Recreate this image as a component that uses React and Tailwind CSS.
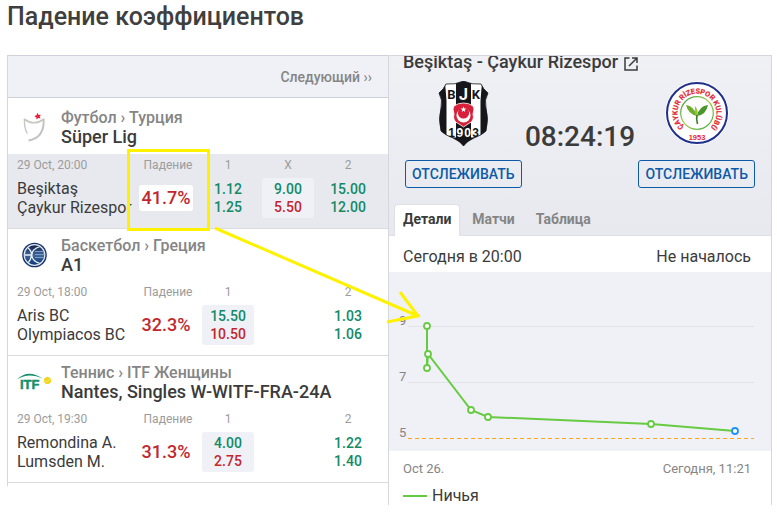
import { useState } from "react";

const matches = [
  {
    id: 1,
    sport: "Футбол › Турция",
    league: "Süper Lig",
    logo: SuperLigLogo,
    date: "29 Oct, 20:00",
    teams: ["Beşiktaş", "Çaykur Rizespor"],
    drop: "41.7%",
    active: true,
    odds: [
      { label: "1", from: "1.12", to: "1.25" },
      { label: "X", from: "9.00", to: "5.50", dropped: true },
      { label: "2", from: "15.00", to: "12.00" },
    ],
  },
  {
    id: 2,
    sport: "Баскетбол › Греция",
    league: "A1",
    logo: BasketLogo,
    date: "29 Oct, 18:00",
    teams: ["Aris BC", "Olympiacos BC"],
    drop: "32.3%",
    odds: [
      { label: "1", from: "15.50", to: "10.50", dropped: true },
      { label: "" },
      { label: "2", from: "1.03", to: "1.06" },
    ],
  },
  {
    id: 3,
    sport: "Теннис › ITF Женщины",
    league: "Nantes, Singles W-WITF-FRA-24A",
    logo: ItfLogo,
    date: "29 Oct, 19:30",
    teams: ["Remondina A.", "Lumsden M."],
    drop: "31.3%",
    odds: [
      { label: "1", from: "4.00", to: "2.75", dropped: true },
      { label: "" },
      { label: "2", from: "1.22", to: "1.40" },
    ],
  },
];

const tabs = ["Детали", "Матчи", "Таблица"];

const points = [
  [38, 54],
  [38, 96],
  [39, 82],
  [82, 138],
  [99, 145],
  [262, 152],
  [346, 159],
];

function SuperLigLogo() {
  return (
    <svg viewBox="0 0 32 32" className="h-8 w-8" fill="none">
      <path d="M5 8 Q15 15.500 25 8" stroke="#c9c7c3" strokeWidth="1.600" />
      <path d="M5.500 8 Q5 17 8.300 22.500" stroke="#c9c7c3" strokeWidth="1.400" />
      <path d="M24.700 8 Q25.500 27 9.500 29.500" stroke="#c4c2be" strokeWidth="1.900" />
      <path
        d="M18.600 1.800 L19.700 3.900 L22 3.700 L20.700 5.500 L21.500 7.600 L19.200 7 L17.500 8.600 L17.300 6.300 L15.300 5.200 L17.600 4.100 Z"
        fill="#e8203f"
      />
    </svg>
  );
}

function BasketLogo() {
  return (
    <svg viewBox="0 0 32 32" className="h-8 w-8" fill="none">
      <defs>
        <linearGradient id="ball" x1="0" y1="0" x2="0" y2="1">
          <stop offset="0" stopColor="#111c40" />
          <stop offset=".5" stopColor="#40689c" />
          <stop offset="1" stopColor="#0b3678" />
        </linearGradient>
        <clipPath id="ballClip">
          <circle cx="15.500" cy="16" r="9.800" />
        </clipPath>
      </defs>
      <circle cx="15.500" cy="16" r="12.300" fill="#15346c" />
      <circle cx="15.500" cy="16" r="10.300" fill="url(#ball)" stroke="#dfe6f0" strokeWidth="1.200" />
      <g clipPath="url(#ballClip)">
        <path d="M16 12.500 H27 M16 15.500 H27 M16 18.500 H27" stroke="#7d9dc4" strokeWidth="1" />
        <path
          d="M5 16 H13 M8 8 Q13 12 12.500 16 Q12 21 9 24 M21 7.500 Q13 10 12.800 16 Q13 22 21 24.500"
          stroke="#e8eef6"
          strokeWidth="1.300"
        />
      </g>
    </svg>
  );
}

function ItfLogo() {
  return (
    <svg viewBox="0 0 36 32" className="h-8 w-9" fill="none">
      <path d="M0 13.500 Q11 2.500 25.500 12.500 Q12 6 0 13.500 Z" fill="#16906c" />
      <text
        x="3"
        y="23"
        fontFamily="Liberation Sans, sans-serif"
        fontSize="13"
        fontWeight="700"
        fill="#16906c"
        stroke="#16906c"
        strokeWidth=".5"
      >
        ITF
      </text>
      <circle cx="30.500" cy="14.500" r="3.600" fill="#f0d51c" />
      <path d="M27.500 15 Q30.500 16.500 33.500 13" stroke="#f8eb8d" strokeWidth=".8" />
    </svg>
  );
}

function BesiktasCrest() {
  return (
    <svg viewBox="0 0 51 66" className="h-[66px] w-[51px]">
      <defs>
        <clipPath id="shield">
          <path d="M8 3 Q17 4 25.500 0 Q34 4 43 3 Q45 8 50 12 Q46 19 48 27 Q51 38 48 50 Q44 54 36 57 Q29 60 25.500 65 Q22 60 15 57 Q7 54 3 50 Q0 38 3 27 Q5 19 1 12 Q6 8 8 3 Z" />
        </clipPath>
      </defs>
      <g clipPath="url(#shield)">
        <rect width="51" height="66" fill="#fff" />
        <path
          d="M0 10 L7 2 Q8 12 8.500 20 V66 H0 Z M51 10 L44 2 Q43 12 42.500 20 V66 H51 Z"
          fill="#15151a"
        />
        <rect x="18" width="15" height="66" fill="#15151a" />
        <path d="M9 45 H17 V56 H9 Z M34 45 H42 V56 H34 Z" fill="#fff" />
        <path d="M5 56 Q17 55.500 25.500 58 Q34 55.500 46 56 V66 H5 Z" fill="#15151a" />
      </g>
      <path
        d="M8 3 Q17 4 25.500 0 Q34 4 43 3 Q45 8 50 12 Q46 19 48 27 Q51 38 48 50 Q44 54 36 57 Q29 60 25.500 65 Q22 60 15 57 Q7 54 3 50 Q0 38 3 27 Q5 19 1 12 Q6 8 8 3 Z"
        fill="none"
        stroke="#15151a"
        strokeWidth=".8"
      />
      <path
        d="M16 25 Q20 22 25.500 22 Q31 22 35 25 L36 28 L35 33 Q37 40 30 43 L25.500 46 L21 43 Q14 40 16 33 L15 28 Z"
        fill="#d9203a"
        stroke="#fff"
        strokeWidth=".8"
      />
      <circle cx="25.500" cy="34.500" r="7" fill="#fff" />
      <circle cx="25.500" cy="32" r="5.600" fill="#d9203a" />
      <path
        d="M25.500 25.500 L26.300 27.500 L28.400 27.600 L26.700 28.900 L27.300 31 L25.500 29.800 L23.700 31 L24.300 28.900 L22.600 27.600 L24.700 27.500 Z"
        fill="#fff"
      />
      <g fontFamily="Roboto, sans-serif" fontWeight="700" textAnchor="middle">
        <text x="13.300" y="17.500" fontSize="13" fill="#15151a">B</text>
        <text x="25.500" y="18.500" fontSize="16" fill="#fff">J</text>
        <text x="38" y="17.500" fontSize="13" fill="#15151a">K</text>
      </g>
      <g fontFamily="Liberation Sans, sans-serif" fontWeight="700" fontSize="12" textAnchor="middle">
        <text x="13.500" y="56" fill="#15151a">1</text>
        <text x="21.800" y="56" fill="#fff">9</text>
        <text x="29.500" y="56" fill="#fff">0</text>
        <text x="37.700" y="56" fill="#15151a">3</text>
      </g>
    </svg>
  );
}

function RizesporCrest() {
  return (
    <svg viewBox="0 0 64 64" className="h-16 w-16">
      <defs>
        <path id="ringTop" d="M27.100 50.800 A19.400 19.400 0 1 1 36.900 50.800" />
        <linearGradient id="ring" x1="0" y1="0" x2="1" y2="1">
          <stop offset="0" stopColor="#2f9a43" />
          <stop offset=".5" stopColor="#a5cf4c" />
          <stop offset="1" stopColor="#3fa345" />
        </linearGradient>
      </defs>
      <circle cx="32" cy="32" r="31.800" fill="#fff" />
      <circle cx="32" cy="32" r="30" fill="#fff" stroke="#20308a" strokeWidth="2" />
      <circle cx="32" cy="32" r="16.300" fill="#fff" stroke="url(#ring)" strokeWidth="1.200" />
      <g fontWeight="700" fill="#e12a32" textAnchor="middle">
        <text
          fontFamily="Roboto, sans-serif"
          fontSize="7.200"
          stroke="#e12a32"
          strokeWidth=".2"
        >
          <textPath href="#ringTop" startOffset="50%">ÇAYKUR RİZESPOR KULÜBÜ</textPath>
        </text>
        <text x="32" y="58.500" fontFamily="Liberation Sans, sans-serif" fontSize="7.500">1953</text>
      </g>
      <path d="M21 24 Q29 25 32 35 Q23 33 21 24 Z" fill="#6fae2c" />
      <path d="M43 24 Q34 25 32 35 Q41 34 43 24 Z" fill="#4b962c" />
      <path d="M30 25 Q34 29 32.500 37 Q29 32 30 25 Z" fill="#95c83d" />
      <path d="M32 34 Q31 38 32.500 43" fill="none" stroke="#397d28" strokeWidth="1.600" />
    </svg>
  );
}

function MatchBlock({ match }) {
  const Logo = match.logo;

  return (
    <section className="border-b border-[#d9dbe0]">
      <div className={`flex items-center gap-2 pl-[9px] ${match.active ? "h-14 pt-[2px]" : "h-[52px]"}`}>
        <div className="flex w-9 justify-center">
          <Logo />
        </div>
        <div>
          <p className="text-base leading-[18px] font-medium text-[#858585]">{match.sport}</p>
          <h2 className="text-lg leading-[19px] font-medium text-[#3b3b3b]">{match.league}</h2>
        </div>
      </div>
      <div className={`pr-[10px] ${match.active ? "bg-[#e8e9ef]" : ""}`}>
        <table className="w-full table-fixed">
          <thead>
            <tr className="h-[22px] text-xs text-[#9c9c9c]">
              <th className="pl-[9px] text-left font-normal">{match.date}</th>
              <th className="w-[60px] font-normal">Падение</th>
              {match.odds.map((odd, i) => (
                <th key={i} className="w-[60px] font-normal">
                  {odd.label}
                </th>
              ))}
            </tr>
          </thead>
          <tbody>
            <tr className="h-[52px] align-top">
              <td className="pl-[9px] pt-[3px] text-base leading-[19px] whitespace-nowrap text-[#3b3b3b]">
                {match.teams[0]}
                <br />
                {match.teams[1]}
              </td>
              <td className="pt-[9px] pr-[5px] pl-px">
                <div
                  className={`rounded-[3px] text-center text-lg leading-[26px] font-medium text-[#c1272d] ${
                    match.active ? "bg-white" : ""
                  }`}
                >
                  {match.drop}
                </div>
              </td>
              {match.odds.map((odd, i) => (
                <td key={i} className="px-1 pt-[2px]">
                  {odd.from && (
                    <div
                      className={`rounded-[3px] py-[2px] text-center text-sm leading-[18px] font-medium text-[#128a66] ${
                        odd.dropped ? "bg-[#f0f1f6]" : ""
                      }`}
                    >
                      {odd.from}
                      <br />
                      <span className={odd.dropped ? "text-[#c1272d]" : ""}>{odd.to}</span>
                    </div>
                  )}
                </td>
              ))}
            </tr>
          </tbody>
        </table>
      </div>
    </section>
  );
}

function OddsChart() {
  return (
    <svg viewBox="0 0 382 179" className="block w-full bg-[#f0f1f6]" fill="none">
      <path d="M19 54.500 H365 M19 110.500 H365" stroke="#e2e3e7" />
      <path d="M19 166.500 H365" stroke="#ffa51f" strokeDasharray="4 3" />
      <g fontFamily="Roboto, sans-serif" fontSize="13" fill="#858585">
        <text x="10" y="53">9</text>
        <text x="10" y="109">7</text>
        <text x="10" y="165">5</text>
      </g>
      <polyline points={points.map((p) => p.join(",")).join(" ")} stroke="#67cb42" strokeWidth="2" />
      {points.map(([x, y], i) => (
        <circle
          key={i}
          cx={x}
          cy={y}
          r="3"
          fill="#fff"
          stroke={i === points.length - 1 ? "#1e90ff" : "#67cb42"}
          strokeWidth="1.800"
        />
      ))}
    </svg>
  );
}

function FollowButton() {
  return (
    <button
      type="button"
      className="h-7 rounded-[3px] border border-[#0d5aa7] px-[6px] text-sm font-medium text-[#0d5aa7]"
    >
      ОТСЛЕЖИВАТЬ
    </button>
  );
}

function MatchDetails() {
  const [tab, setTab] = useState("Детали");

  return (
    <div className="overflow-hidden border-x border-t border-[#d5d7dc] bg-white">
      <div className="bg-linear-to-b from-[#f0f1f5] to-[#e8e9ef]">
        <div className="-mt-2 flex items-center gap-[6px] pl-[14px]">
          <h2 className="text-lg leading-7 font-medium text-[#3b3b3b]">Beşiktaş - Çaykur Rizespor</h2>
          <a href="#match" aria-label="Beşiktaş - Çaykur Rizespor" className="pt-1">
            <svg viewBox="0 0 14 14" className="h-[14px] w-[14px]" fill="none" stroke="#3b3b3b" strokeWidth="1.500">
              <path d="M5.500 1 H1 V13 H13 V8.500" />
              <path d="M8 1 H13 V6 M13 1 L5 9" />
            </svg>
          </a>
        </div>
        <div className="flex justify-between px-4 pt-[5px]">
          <div className="flex flex-col items-center gap-[13px]">
            <BesiktasCrest />
            <FollowButton />
          </div>
          <div className="pt-[38px] text-[28px] leading-9 font-medium text-[#3b3b3b]">08:24:19</div>
          <div className="flex flex-col items-center gap-[15px]">
            <RizesporCrest />
            <FollowButton />
          </div>
        </div>
        <nav className="mt-4 flex gap-[3px] border-b border-[#dfe0e6] pl-[5px]">
          {tabs.map((name) => (
            <button
              key={name}
              type="button"
              onClick={() => setTab(name)}
              className={`-mb-px h-8 rounded-t-[4px] border border-b-0 px-2 pb-[3px] text-sm font-bold ${
                tab === name
                  ? "border-[#dfe0e6] bg-white text-[#3b3b3b]"
                  : "border-transparent text-[#858585]"
              }`}
            >
              {name}
            </button>
          ))}
        </nav>
      </div>
      <div className="flex h-9 items-center justify-between pt-[5px] pr-5 pl-[14px] text-base text-[#3b3b3b]">
        <span>Сегодня в 20:00</span>
        <span>Не началось</span>
      </div>
      <OddsChart />
      <div className="flex h-9 items-center justify-between pr-5 pl-[14px] text-[13px] text-[#858585]">
        <span>Oct 26.</span>
        <span>Сегодня, 11:21</span>
      </div>
      <div className="flex h-[18px] items-center gap-[5px] pl-[14px] text-base leading-[18px] text-[#3b3b3b]">
        <span className="h-[2px] w-6 bg-[#67cb42]" />
        <span>Ничья</span>
      </div>
    </div>
  );
}

export default function App() {
  return (
    <div className="relative bg-white pr-[5px] pl-[7px] font-['Roboto',sans-serif]">
      <h1 className="pt-[1px] text-[25px] leading-8 font-medium text-[#3f3f3f]">
        Падение коэффициентов
      </h1>
      <div className="mt-[22px] grid grid-cols-[381fr_384fr] items-start">
        <div className="border-l border-[#d5d7dc] pb-[3px]">
          <div className="flex h-[43px] items-center justify-end border-y border-[#cfd1d8] bg-[#f0f1f6] pr-4">
            <a href="#next" className="text-sm font-medium text-[#858585]">
              Следующий ››
            </a>
          </div>
          {matches.map((match) => (
            <MatchBlock key={match.id} match={match} />
          ))}
        </div>
        <MatchDetails />
      </div>

      {/* highlight frame and arrow from the drop value to the chart */}
      <svg
        viewBox="0 0 777 514"
        className="pointer-events-none absolute top-0 left-0 w-full"
        fill="none"
        stroke="#fff200"
        strokeWidth="3"
      >
        <rect x="128.500" y="150.500" width="80" height="79" />
        <path d="M215 228 L418 316 M400 292 L418 316 M387 322 L420 315.500" />
      </svg>
    </div>
  );
}
